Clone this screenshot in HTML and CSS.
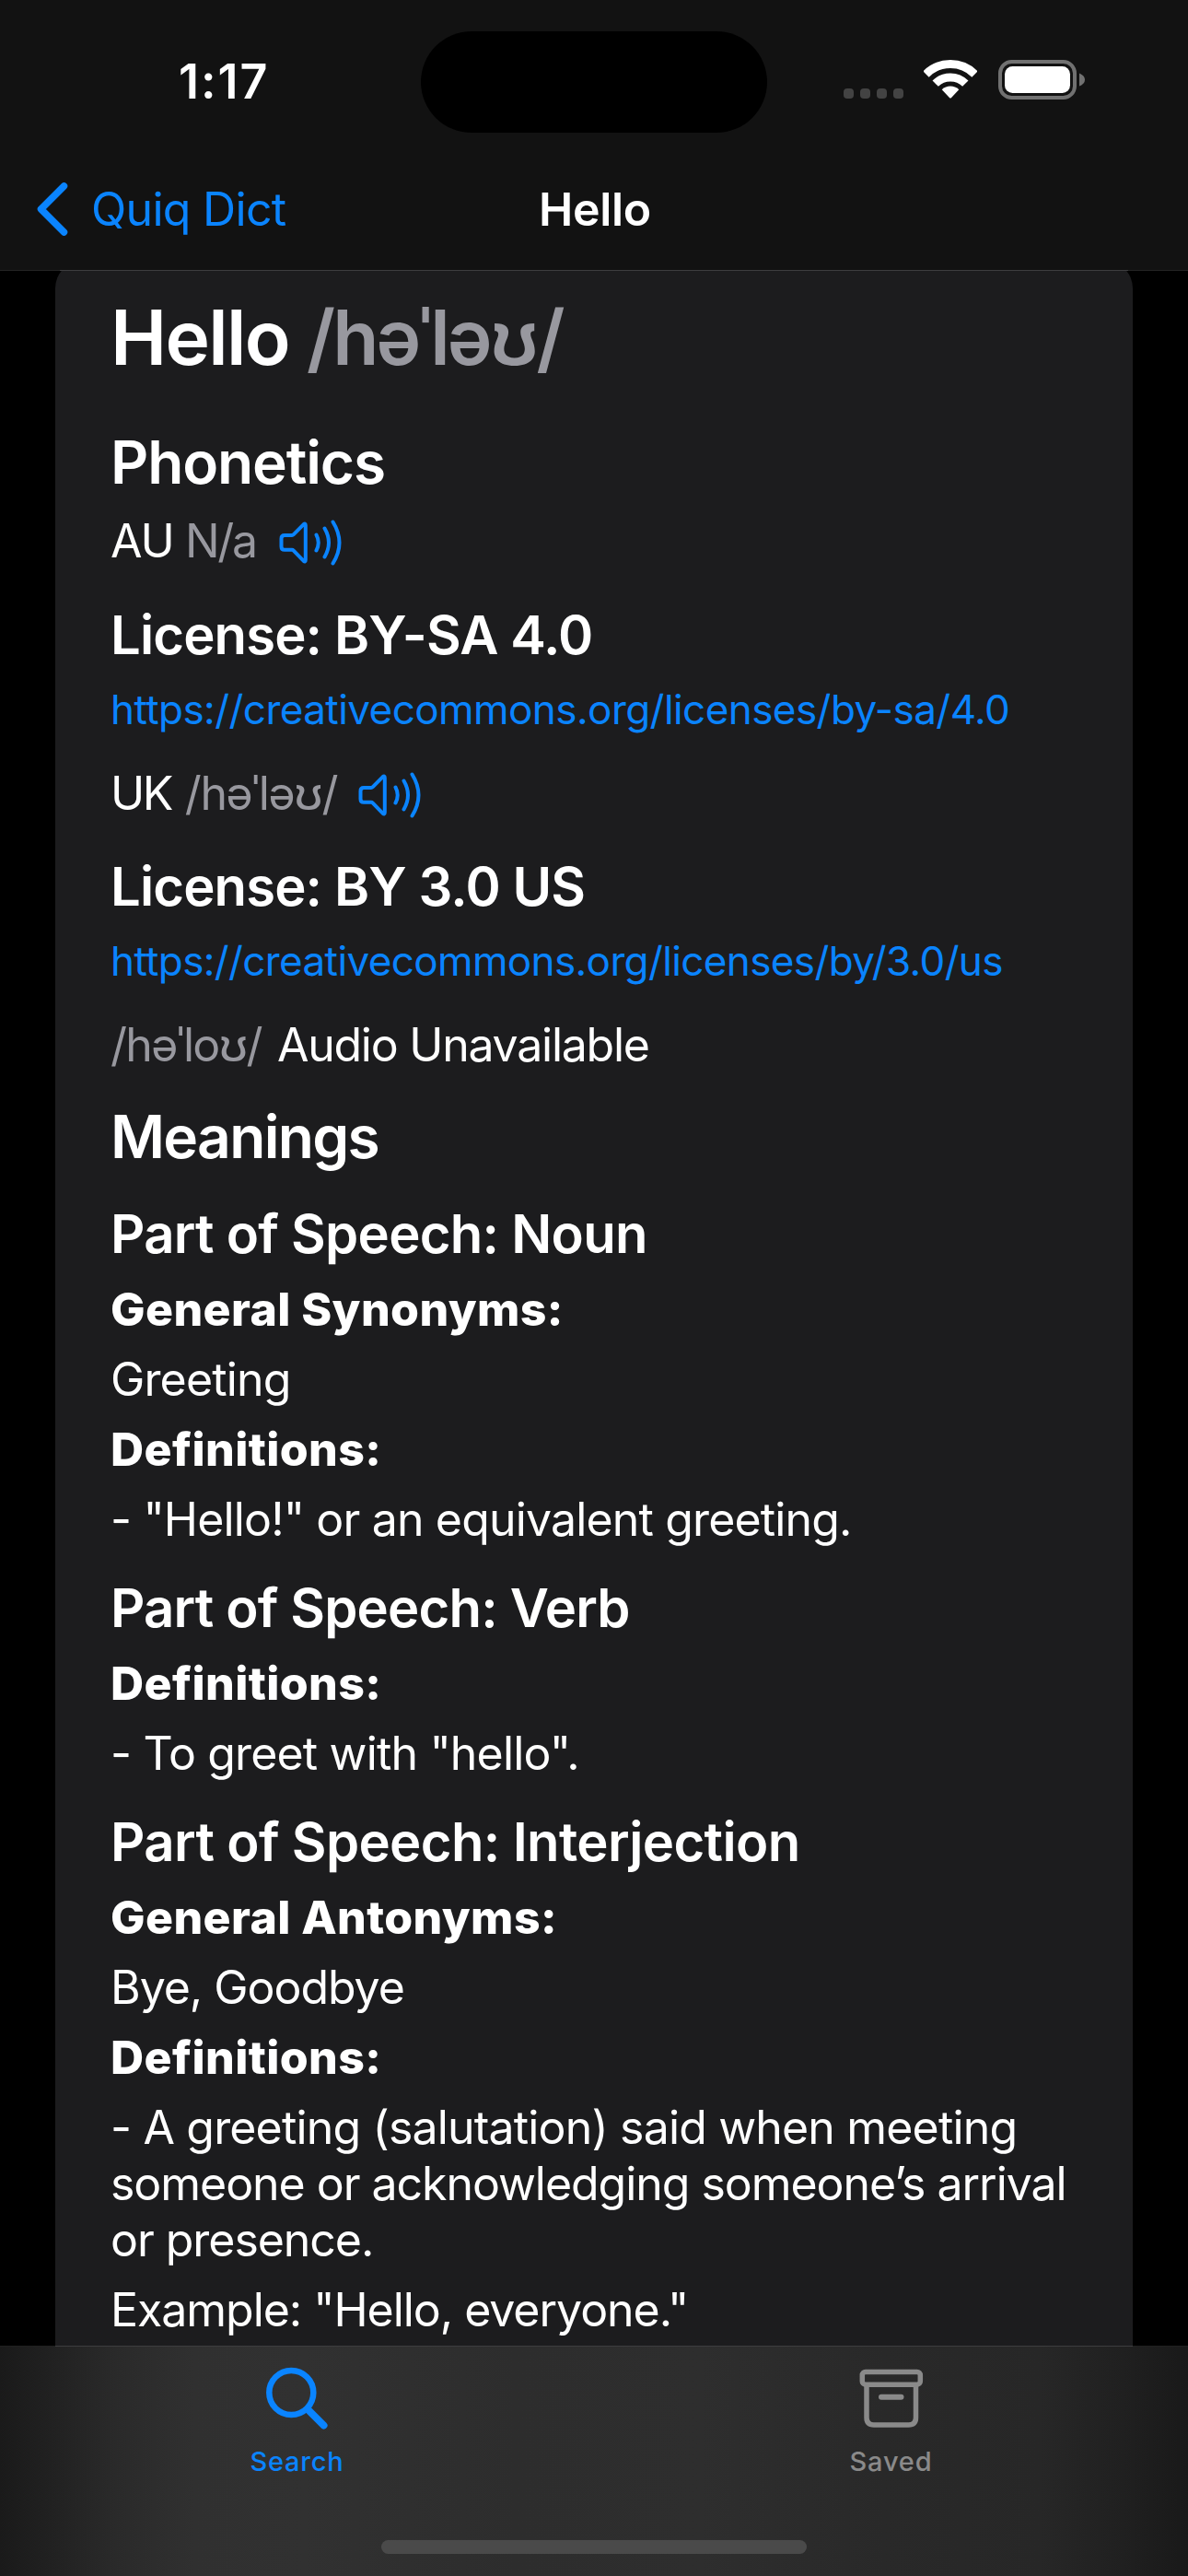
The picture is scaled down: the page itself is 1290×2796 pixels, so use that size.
FILE: index.html
```html
<!DOCTYPE html>
<html lang="en">
<head>
<meta charset="utf-8">
<title>Hello</title>
<link rel="stylesheet" href="styles.css">
</head>
<body>
<svg class="defs" width="0" height="0">
  <symbol id="speaker" viewBox="0 0 68 50">
    <g fill="none" stroke="currentColor" stroke-width="4" stroke-linecap="round" stroke-linejoin="round">
      <path d="M6 17h8q1 0 1.8-.8L26.5 5.3q2.3-2 2.3.9v37.6q0 2.9-2.3.9L15.8 33.6q-.8-.8-1.8-.8H6q-3.5 0-3.5-3.5v-8.8Q2.500 17 6 17z"/>
      <path d="M40.500 16.500Q45 25 40.500 33.500M49.500 9.500Q58.500 25 49.500 40.500M58.500 2.500Q72.500 25 58.500 47.500"/>
    </g>
  </symbol>
</svg>
<div class="screen">
  <header class="header">
    <div class="status">
      <span class="time">1:17</span>
      <span class="island"></span>
      <span class="indicators">
        <span class="cell"><i></i><i></i><i></i><i></i></span>
        <svg class="wifi" viewBox="0 0 58 43" width="58" height="43">
          <g fill="none" stroke="#fff" stroke-width="9">
            <path d="M2.500 15.500A37.500 37.500 0 0 1 55.500 15.500"/>
            <path d="M12.700 25.700A23 23 0 0 1 45.300 25.700"/>
          </g>
          <path fill="#fff" d="M19.700 32.200A13.600 13.600 0 0 1 38.300 32.200L29.800 41.200Q29 42 28.200 41.200z"/>
        </svg>
        <svg class="battery" viewBox="0 0 95 43" width="95" height="43">
          <rect x="2" y="2" width="81" height="39" rx="12.500" fill="none" stroke="#717171" stroke-width="4"/>
          <rect x="7" y="7" width="71" height="29" rx="8.500" fill="#fff"/>
          <path d="M88 14.500Q94 17 94 21.500T88 28.500z" fill="#717171"/>
        </svg>
      </span>
    </div>
    <nav class="nav">
      <a class="back">
        <svg viewBox="0 0 34 58" width="34" height="58"><path d="M29.500 4L4.500 29L29.500 54" fill="none" stroke="currentColor" stroke-width="7.500" stroke-linecap="round" stroke-linejoin="round"/></svg>
        <span>Quiq Dict</span>
      </a>
      <h1 class="nav-title">Hello</h1>
    </nav>
  </header>

  <main class="content">
    <article class="card">
      <h2 class="word">Hello <span class="ipa">/həˈləʊ/</span></h2>

      <h3 class="section">Phonetics</h3>
      <p class="phonetic au"><span class="region">AU</span><span class="ipa">N/a</span><svg class="speaker" width="68" height="50"><use href="#speaker"/></svg></p>
      <h4 class="sub license">License: BY-SA 4.0</h4>
      <a class="link">https://creativecommons.org/licenses/by-sa/4.0</a>
      <p class="phonetic uk"><span class="region">UK</span><span class="ipa">/həˈləʊ/</span><svg class="speaker" width="68" height="50"><use href="#speaker"/></svg></p>
      <h4 class="sub license">License: BY 3.0 US</h4>
      <a class="link us">https://creativecommons.org/licenses/by/3.0/us</a>
      <p class="phonetic silent"><span class="ipa">/həˈloʊ/</span><span class="note">Audio Unavailable</span></p>

      <h3 class="section meanings">Meanings</h3>
      <h4 class="sub">Part of Speech: Noun</h4>
      <h5 class="label">General Synonyms:</h5>
      <p class="text">Greeting</p>
      <h5 class="label">Definitions:</h5>
      <p class="text">- "Hello!" or an equivalent greeting.</p>

      <h4 class="sub verb">Part of Speech: Verb</h4>
      <h5 class="label">Definitions:</h5>
      <p class="text">- To greet with "hello".</p>

      <h4 class="sub interjection">Part of Speech: Interjection</h4>
      <h5 class="label">General Antonyms:</h5>
      <p class="text tight">Bye, Goodbye</p>
      <h5 class="label">Definitions:</h5>
      <p class="text tight"><span class="loose">- A greeting (salutation) said when meeting</span><br>someone or acknowledging someone’s arrival<br>or presence.</p>
      <p class="text tight">Example: "Hello, everyone."</p>
    </article>
  </main>

  <footer class="tabbar">
    <div class="tabs">
      <a class="tab active">
        <svg viewBox="0 0 72 72" width="72" height="72" fill="none" stroke="currentColor" stroke-linecap="round"><circle cx="29.300" cy="29" r="24" stroke-width="6.500"/><path d="M48 48L64.500 64.500" stroke-width="8"/></svg>
        <span>Search</span>
      </a>
      <a class="tab">
        <svg viewBox="0 0 72 72" width="72" height="72" fill="none" stroke="currentColor" stroke-width="5.500"><rect x="4.300" y="6.500" width="63" height="13.700" rx="3.500"/><path d="M9 21V56Q9 64 17 64H54.500Q62.500 64 62.500 56V21"/><path d="M25 33.700H46.500" stroke-width="6" stroke-linecap="round"/></svg>
        <span>Saved</span>
      </a>
    </div>
    <div class="home"></div>
  </footer>
</div>
</body>
</html>
```
FILE: styles.css
```css
* { box-sizing: border-box; margin: 0; padding: 0; }

body {
  background: #000;
  color: #fff;
  font-family: Inter, "Liberation Sans", sans-serif;
  font-size: 50px;
  line-height: 61px;
}

.defs { display: block; }

.screen {
  display: flex;
  flex-direction: column;
  width: 1290px;
  height: 2796px;
  overflow: hidden;
}

/* Header */
.header {
  flex: none;
  height: 294px;
  background:
    linear-gradient(90deg, #242424 65px, #3d3d3f 65px, #3d3d3f 1225px, #242424 1225px) bottom / 100% 1px no-repeat,
    #121212;
  z-index: 1;
}

.status {
  display: grid;
  grid-template-columns: 457px 376px 1fr;
  height: 177px;
  padding-top: 34px;
}

.time {
  padding: 24px 0 0 194px;
  font-size: 52px;
  font-weight: 600;
  letter-spacing: 2px;
}

.island {
  height: 110px;
  border-radius: 55px;
  background: #000;
}

.indicators {
  display: flex;
  align-items: flex-start;
  padding: 31px 0 0 83px;
}

.cell {
  display: flex;
  gap: 7px;
  width: 87px;
  padding-top: 31px;
}

.cell i {
  width: 11px;
  height: 11px;
  border-radius: 4px;
  background: #434343;
}

.wifi { margin-right: 23px; }

.nav {
  display: grid;
  grid-template-columns: 1fr auto 1fr;
  align-items: center;
  height: 100px;
}

.back {
  display: flex;
  align-items: center;
  gap: 25px;
  padding-left: 40px;
  color: #0a84ff;
  letter-spacing: -0.7px;
}

.nav-title {
  padding-left: 2px;
  font-size: 50px;
  font-weight: 600;
  letter-spacing: -0.3px;
}

/* Entry card */
.content {
  flex: 1;
  min-height: 0;
  overflow: hidden;
  padding: 0 60px;
}

.card {
  height: 2400px;
  margin-top: -11px;
  padding: 33px 60px 0;
  border-radius: 30px;
  background: #1c1c1e;
  white-space: nowrap;
}

.ipa { color: #98989f; }

.word {
  font-size: 82px;
  font-weight: 600;
  line-height: 102px;
  letter-spacing: -1.7px;
}

.word .ipa { letter-spacing: -2.8px; }

.section {
  margin-top: 45px;
  font-size: 64px;
  font-weight: 600;
  line-height: 78px;
  letter-spacing: -1.13px;
}

.section.meanings {
  margin-top: 30px;
  letter-spacing: -1.69px;
}

.sub {
  margin-top: 30px;
  font-size: 58px;
  font-weight: 600;
  line-height: 72px;
  letter-spacing: -0.72px;
}

.text + .sub { margin-top: 29px; }
.sub.verb { letter-spacing: -0.82px; }
.sub.interjection { letter-spacing: -0.63px; }

.sub.license {
  margin-top: 34px;
  letter-spacing: -0.87px;
}

.au + .sub.license { margin-top: 35px; }

.link {
  display: block;
  margin-top: 18px;
  color: #0a84ff;
  font-size: 44px;
  line-height: 54px;
  letter-spacing: -0.56px;
}

.link.us { letter-spacing: -0.62px; }

.phonetic {
  display: flex;
  align-items: center;
  height: 61px;
  margin-top: 34px;
}

.phonetic.au { margin-top: 16px; }

.speaker {
  margin-top: 3px;
  color: #0a84ff;
}

.au .region { margin-right: 12px; letter-spacing: -0.9px; }
.au .ipa { margin-right: 25px; letter-spacing: -2.3px; }
.uk .region { margin-right: 15px; letter-spacing: -2.5px; }
.uk .ipa { margin-right: 23px; letter-spacing: -1.4px; }
.silent .ipa { margin-right: 17px; letter-spacing: -1.67px; }
.silent .note { letter-spacing: -1.25px; }

.label {
  margin-top: 15px;
  font-size: 50px;
  font-weight: 800;
  letter-spacing: 0.4px;
}

.sub + .label { margin-top: 16px; }

.text {
  margin-top: 15px;
  letter-spacing: -0.84px;
}

.text.tight { letter-spacing: -1.04px; }
.text .loose { letter-spacing: -0.83px; }

/* Tab bar */
.tabbar {
  flex: none;
  height: 250px;
  padding-top: 22px;
  background:
    linear-gradient(90deg, #202020 60px, #3d3d3f 60px, #3d3d3f 1230px, #202020 1230px) top / 100% 1px no-repeat,
    linear-gradient(90deg, #1a1a1a 0, #1f1f1f 40px, #2a2a2a 125px, #303030 210px, #313131 330px, #2d2d2d 560px, #2e2e2e 760px, #292929 960px, #272727 1130px, #202020 1220px, #191919 1290px);
}

.tabs {
  display: grid;
  grid-template-columns: 1fr 1fr;
}

.tab {
  display: flex;
  flex-direction: column;
  align-items: center;
  gap: 14px;
  color: #8a8a8a;
  font-size: 29px;
  font-weight: 500;
  line-height: 36px;
  letter-spacing: 0.8px;
}

.tab.active { color: #0a84ff; }

.home {
  width: 462px;
  height: 15px;
  margin: 67px auto 0;
  border-radius: 8px;
  background: #4a4a4a;
}
```
